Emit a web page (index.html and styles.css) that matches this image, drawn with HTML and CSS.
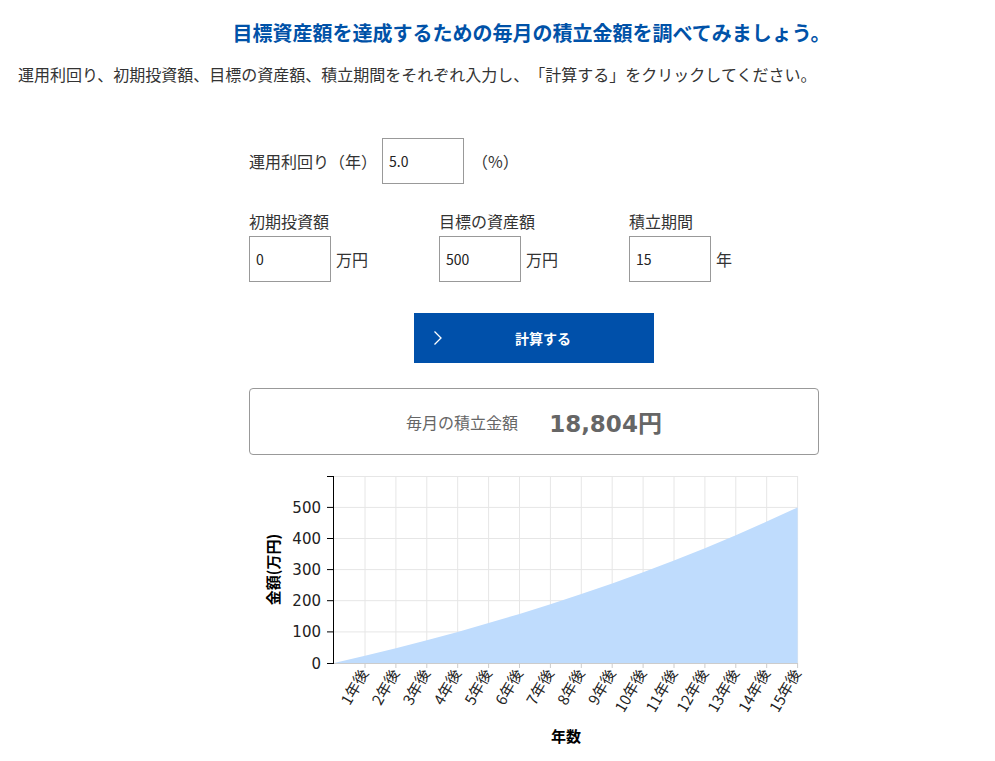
FILE: index.html
```html
<!DOCTYPE html>
<html lang="ja">
<head>
<meta charset="utf-8">
<title>積立シミュレーション</title>
<link rel="stylesheet" href="styles.css">
</head>
<body>
<h1 class="title">目標資産額を達成するための毎月の積立金額を調べてみましょう。</h1>
<p class="lead">運用利回り、初期投資額、目標の資産額、積立期間をそれぞれ入力し、「計算する」をクリックしてください。</p>

<section class="sim">
  <div class="row-rate">
    <label class="label" for="rate">運用利回り（年）</label>
    <input class="field" id="rate" type="text" value="5.0">
    <span class="unit unit-pct">（%）</span>
  </div>

  <div class="row-three">
    <div class="col">
      <label class="label" for="init">初期投資額</label>
      <div class="col-input">
        <input class="field" id="init" type="text" value="0">
        <span class="unit">万円</span>
      </div>
    </div>
    <div class="col">
      <label class="label" for="goal">目標の資産額</label>
      <div class="col-input">
        <input class="field" id="goal" type="text" value="500">
        <span class="unit">万円</span>
      </div>
    </div>
    <div class="col">
      <label class="label" for="period">積立期間</label>
      <div class="col-input">
        <input class="field" id="period" type="text" value="15">
        <span class="unit">年</span>
      </div>
    </div>
  </div>

  <button class="calc" type="button">
    <svg class="chev" width="10" height="16" viewBox="0 0 10 16"><path d="M1.5 1.5 L8 8 L1.5 14.5" fill="none" stroke="#fff" stroke-width="1.3"/></svg>
    <span>計算する</span>
  </button>

  <div class="result">
    <span class="result-label">毎月の積立金額</span>
    <span class="result-value">18,804<span class="yen">円</span></span>
  </div>

  <svg class="chart" width="570" height="290" viewBox="0 0 570 290">
    <g transform="translate(-249,-466)">
      <g class="grid" stroke="#e6e6e6" stroke-width="1">
        <line x1="334" y1="631.9" x2="798" y2="631.9"/>
        <line x1="334" y1="600.7" x2="798" y2="600.7"/>
        <line x1="334" y1="569.6" x2="798" y2="569.6"/>
        <line x1="334" y1="538.5" x2="798" y2="538.5"/>
        <line x1="334" y1="507.4" x2="798" y2="507.4"/>
        <line x1="334" y1="476.5" x2="798" y2="476.5"/>
        <line x1="365.0" y1="476" x2="365.0" y2="663"/>
        <line x1="395.9" y1="476" x2="395.9" y2="663"/>
        <line x1="426.8" y1="476" x2="426.8" y2="663"/>
        <line x1="457.7" y1="476" x2="457.7" y2="663"/>
        <line x1="488.6" y1="476" x2="488.6" y2="663"/>
        <line x1="519.5" y1="476" x2="519.5" y2="663"/>
        <line x1="550.4" y1="476" x2="550.4" y2="663"/>
        <line x1="581.3" y1="476" x2="581.3" y2="663"/>
        <line x1="612.2" y1="476" x2="612.2" y2="663"/>
        <line x1="643.1" y1="476" x2="643.1" y2="663"/>
        <line x1="674.0" y1="476" x2="674.0" y2="663"/>
        <line x1="704.9" y1="476" x2="704.9" y2="663"/>
        <line x1="735.8" y1="476" x2="735.8" y2="663"/>
        <line x1="766.7" y1="476" x2="766.7" y2="663"/>
        <line x1="797.6" y1="476" x2="797.6" y2="663"/>
      </g>
      <path class="area" d="M334.1 663 L365.0 655.8 L395.9 648.2 L426.8 640.3 L457.7 631.9 L488.6 623.1 L519.5 613.9 L550.4 604.3 L581.3 594.1 L612.2 583.5 L643.1 572.3 L674.0 560.5 L704.9 548.2 L735.8 535.2 L766.7 521.6 L797.6 507.4 L797.6 663 Z" fill="#bfdcfd"/>
      <g stroke="#cccccc" stroke-width="1">
        <line x1="334" y1="663.5" x2="798" y2="663.5"/>
        <line x1="365.0" y1="663" x2="365.0" y2="668"/>
        <line x1="395.9" y1="663" x2="395.9" y2="668"/>
        <line x1="426.8" y1="663" x2="426.8" y2="668"/>
        <line x1="457.7" y1="663" x2="457.7" y2="668"/>
        <line x1="488.6" y1="663" x2="488.6" y2="668"/>
        <line x1="519.5" y1="663" x2="519.5" y2="668"/>
        <line x1="550.4" y1="663" x2="550.4" y2="668"/>
        <line x1="581.3" y1="663" x2="581.3" y2="668"/>
        <line x1="612.2" y1="663" x2="612.2" y2="668"/>
        <line x1="643.1" y1="663" x2="643.1" y2="668"/>
        <line x1="674.0" y1="663" x2="674.0" y2="668"/>
        <line x1="704.9" y1="663" x2="704.9" y2="668"/>
        <line x1="735.8" y1="663" x2="735.8" y2="668"/>
        <line x1="766.7" y1="663" x2="766.7" y2="668"/>
        <line x1="797.6" y1="663" x2="797.6" y2="668"/>
      </g>
      <g stroke="#000" stroke-width="1">
        <line x1="333.5" y1="476" x2="333.5" y2="663.5"/>
        <line x1="327" y1="663.5" x2="334" y2="663.5"/>
        <line x1="327" y1="631.9" x2="334" y2="631.9"/>
        <line x1="327" y1="600.7" x2="334" y2="600.7"/>
        <line x1="327" y1="569.6" x2="334" y2="569.6"/>
        <line x1="327" y1="538.5" x2="334" y2="538.5"/>
        <line x1="327" y1="507.4" x2="334" y2="507.4"/>
        <line x1="327" y1="476.5" x2="334" y2="476.5"/>
      </g>
      <g class="ytick" text-anchor="end">
        <text x="321" y="668.5">0</text>
        <text x="321" y="637.4">100</text>
        <text x="321" y="606.2">200</text>
        <text x="321" y="575.1">300</text>
        <text x="321" y="544">400</text>
        <text x="321" y="512.9">500</text>
      </g>
      <text class="axis-title" text-anchor="middle" transform="translate(279,569.5) rotate(-90)">金額(万円)</text>
      <g class="xtick" text-anchor="end">
        <text transform="translate(369,673) rotate(-60)">1年後</text>
        <text transform="translate(399.9,673) rotate(-60)">2年後</text>
        <text transform="translate(430.8,673) rotate(-60)">3年後</text>
        <text transform="translate(461.7,673) rotate(-60)">4年後</text>
        <text transform="translate(492.6,673) rotate(-60)">5年後</text>
        <text transform="translate(523.5,673) rotate(-60)">6年後</text>
        <text transform="translate(554.4,673) rotate(-60)">7年後</text>
        <text transform="translate(585.3,673) rotate(-60)">8年後</text>
        <text transform="translate(616.2,673) rotate(-60)">9年後</text>
        <text transform="translate(647.1,673) rotate(-60)">10年後</text>
        <text transform="translate(678.0,673) rotate(-60)">11年後</text>
        <text transform="translate(708.9,673) rotate(-60)">12年後</text>
        <text transform="translate(739.8,673) rotate(-60)">13年後</text>
        <text transform="translate(770.7,673) rotate(-60)">14年後</text>
        <text transform="translate(801.6,673) rotate(-60)">15年後</text>
      </g>
      <text class="axis-title" x="566" y="742" text-anchor="middle">年数</text>
    </g>
  </svg>
</section>
</body>
</html>
```

FILE: styles.css
```css
html, body {
  margin: 0;
  padding: 0;
}
body {
  font-family: "Noto Sans CJK JP", "Noto Sans", sans-serif;
  color: #333;
  background: #fff;
  overflow: hidden;
  text-spacing-trim: space-all;
}
.title {
  margin: 0;
  padding: 18px 0 0 68px;
  font-size: 20px;
  line-height: 30px;
  font-weight: bold;
  color: #0052a8;
  text-align: center;
}
.lead {
  margin: 14px 0 0 18px;
  font-size: 16px;
  line-height: 24px;
  color: #333;
}
.sim {
  width: 570px;
  margin: 52px 0 0 249px;
  display: flex;
  flex-direction: column;
}
.label {
  font-size: 16px;
  line-height: 24px;
  color: #333;
}
.field {
  box-sizing: border-box;
  width: 82px;
  height: 46px;
  margin: 0;
  padding: 0 0 0 6px;
  border: 1px solid #999;
  border-radius: 0;
  font-family: "Noto Sans CJK JP", "Noto Sans", sans-serif;
  font-size: 14px;
  color: #222;
  background: #fff;
  outline: none;
}
.unit {
  font-size: 16px;
  line-height: 24px;
  color: #333;
  margin-left: 5px;
}
.unit-pct {
  margin-left: 8px;
}
.row-rate {
  display: flex;
  align-items: center;
  gap: 0;
}
.row-rate .label {
  width: 133px;
}
.row-three {
  display: flex;
  margin-top: 25px;
}
.col {
  width: 190px;
  display: flex;
  flex-direction: column;
  gap: 3px;
}
.col-input {
  display: flex;
  align-items: center;
}
.calc {
  position: relative;
  align-self: center;
  width: 240px;
  height: 50px;
  margin-top: 31px;
  padding: 0 0 0 18px;
  border: none;
  border-radius: 0;
  background: #0050aa;
  color: #fff;
  font-family: "Noto Sans CJK JP", "Noto Sans", sans-serif;
  font-size: 14px;
  font-weight: bold;
  cursor: pointer;
}
.chev {
  position: absolute;
  left: 19px;
  top: 17px;
}
.result {
  box-sizing: border-box;
  height: 67px;
  margin-top: 25px;
  border: 1px solid #999;
  border-radius: 4px;
  display: flex;
  align-items: center;
  justify-content: center;
  gap: 31px;
  color: #666;
}
.result-label {
  font-size: 16px;
}
.result-value {
  font-family: "DejaVu Sans", "Noto Sans CJK JP", sans-serif;
  font-size: 23px;
  font-weight: bold;
}
.yen {
  font-family: "Noto Sans CJK JP", sans-serif;
  font-size: 24px;
}
.chart {
  display: block;
  margin-top: 11px;
}
.ytick text {
  font-family: "DejaVu Sans", sans-serif;
  font-size: 15px;
  fill: #222;
}
.xtick text {
  font-family: "Noto Sans CJK JP", sans-serif;
  font-size: 15px;
  fill: #222;
}
.axis-title {
  font-family: "Noto Sans CJK JP", sans-serif;
  font-size: 15px;
  font-weight: bold;
  fill: #000;
}
```
